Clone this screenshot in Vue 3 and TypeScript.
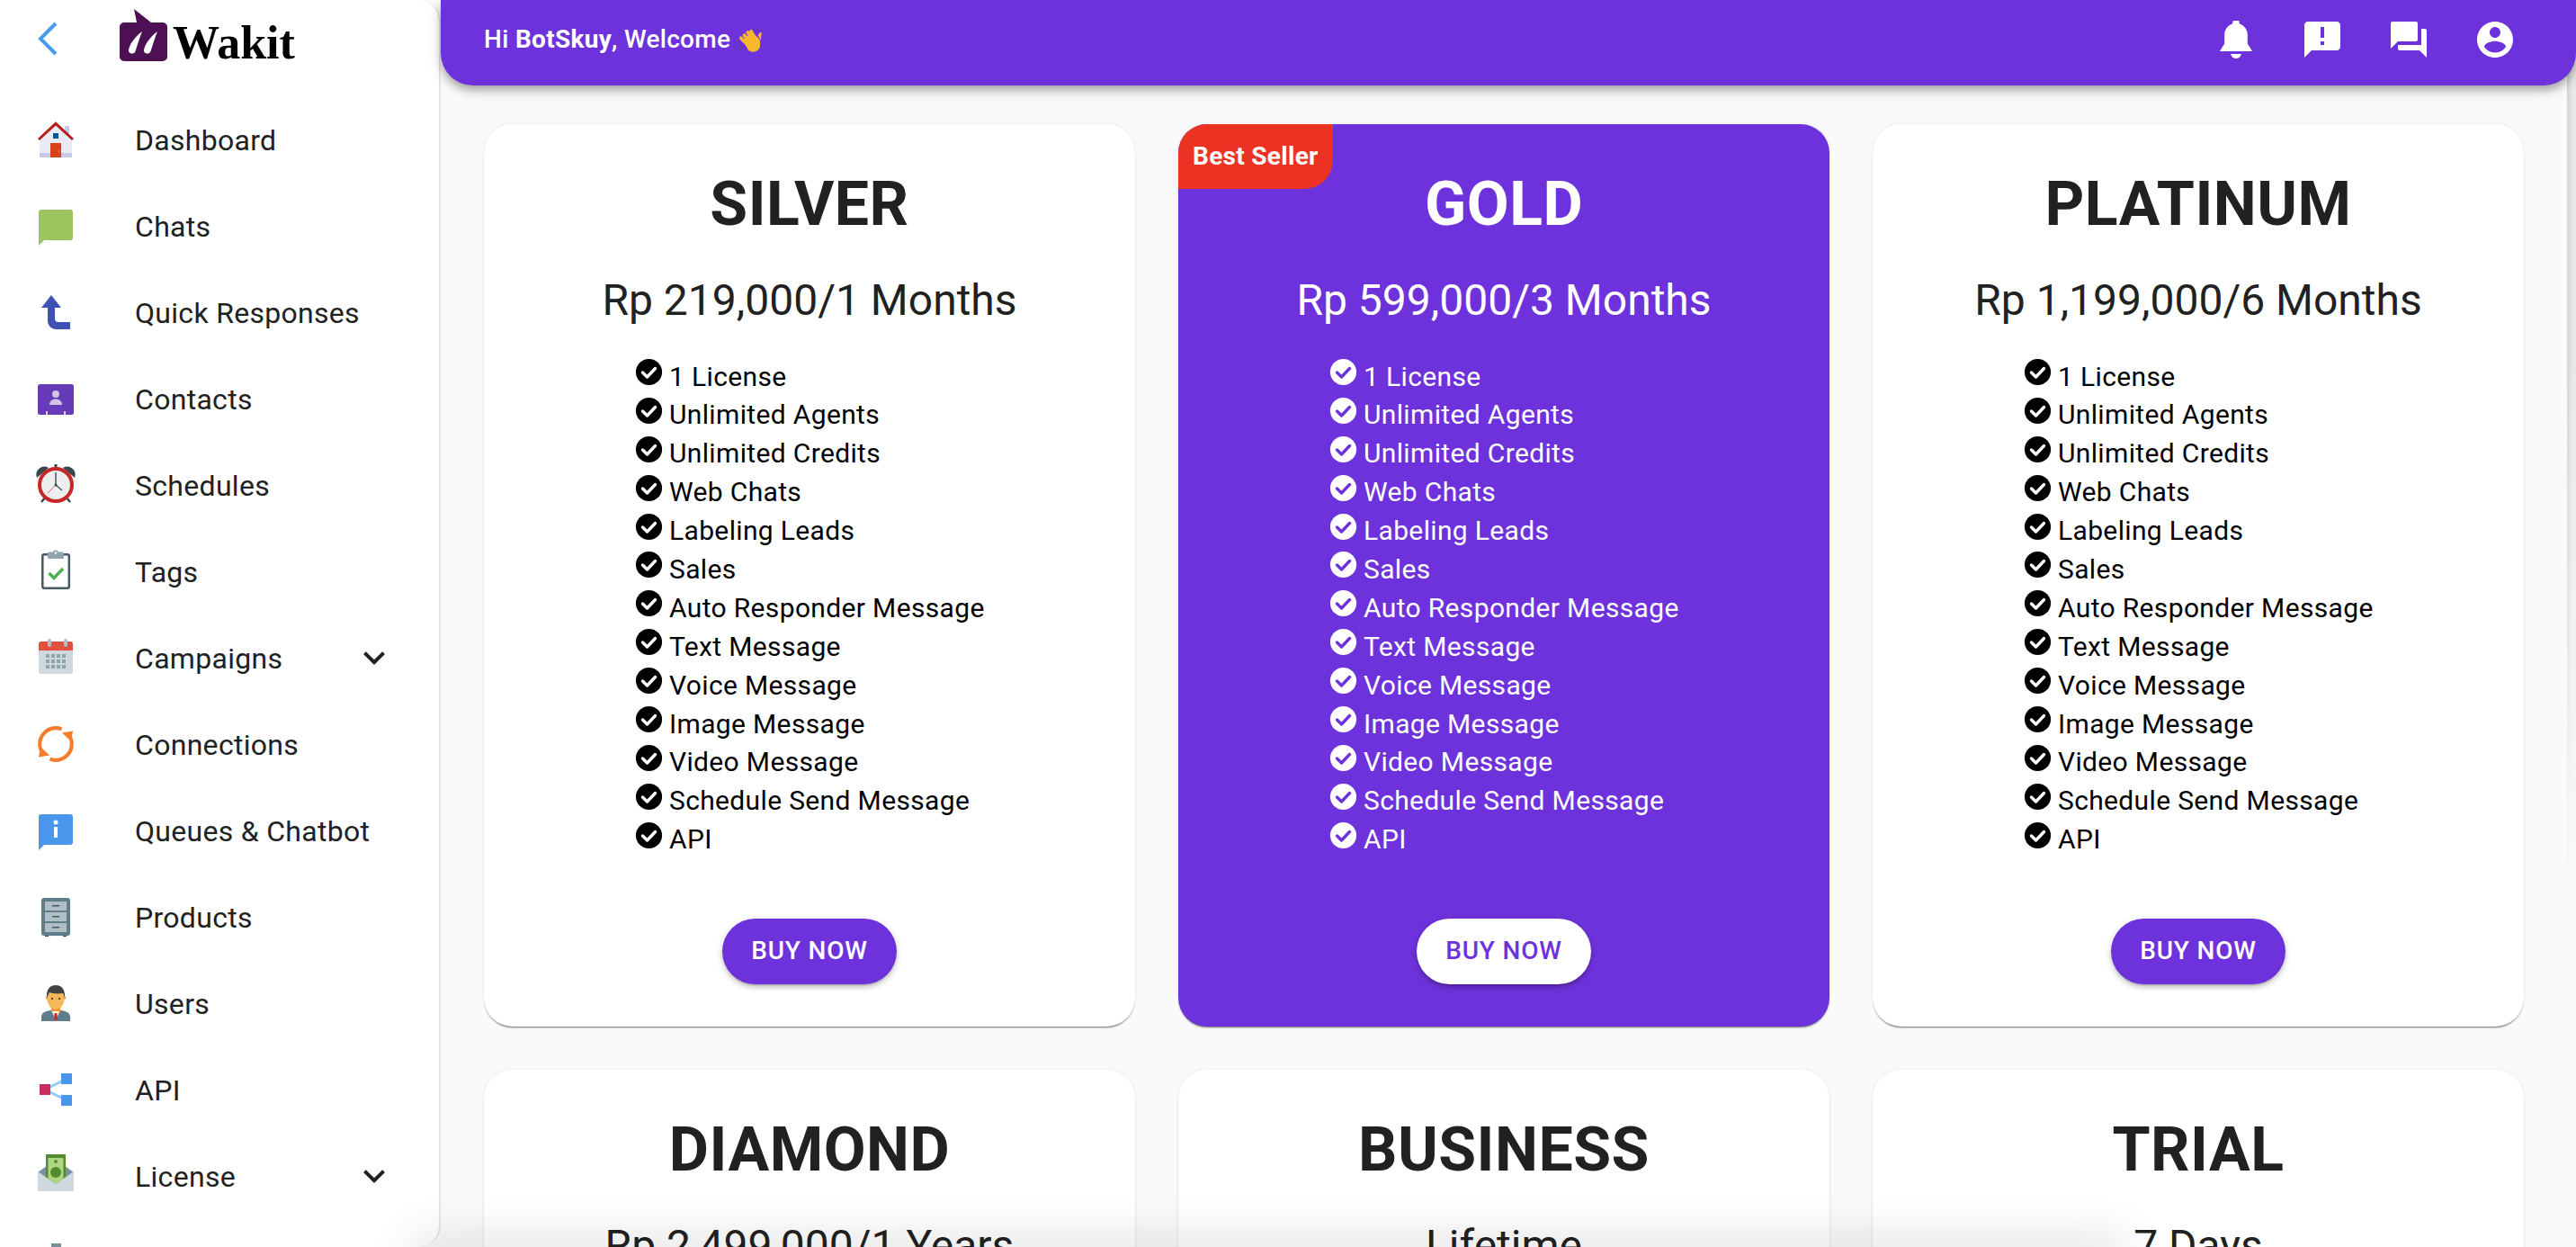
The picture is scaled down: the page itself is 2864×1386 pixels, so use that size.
<template>
  <div class="layout">
    <aside class="sidebar">
      <div class="brand">
        <svg class="back" viewBox="0 0 24 40" width="24" height="40">
          <path d="M21 3 4 20l17 17" fill="none" stroke="#4a9bf0" stroke-width="4" />
        </svg>
        <svg class="logo-mark" viewBox="0 0 54 60" width="54" height="60">
          <path d="M16 0 35 15h13a5 5 0 0 1 5 5v33a5 5 0 0 1-5 5H5a5 5 0 0 1-5-5V20a5 5 0 0 1 5-5h14z" fill="#4d1052" />
          <path d="M25 25c-8 6-14 14-15 21-.5 4 6 5 7.500 1C20 40 22 32 25 25zM42 25c-8 6-14 14-15 21-.5 4 6 5 7.500 1C37 40 39 32 42 25z" fill="#fff" />
        </svg>
        <span class="logo-text">Wakit</span>
      </div>
      <nav class="menu">
        <div v-for="item in menu" :key="item.id" class="menu-item">
          <svg class="menu-icon" viewBox="0 0 48 48" width="48" height="48">
            <g v-if="item.id === 'home'">
              <polygon fill="#E8EAF6" points="42,39 6,39 6,23 24,6 42,23" />
              <polygon fill="#C5CAE9" points="39,21 34,16 34,9 39,9" />
              <rect x="6" y="39" width="36" height="5" fill="#C5CAE9" />
              <polygon fill="#B71C1C" points="24,4.3 4,22.9 6,25.1 24,8.4 42,25.1 44,22.9" />
              <rect x="18" y="28" width="12" height="16" fill="#D84315" />
              <rect x="21" y="17" width="6" height="6" fill="#01579B" />
              <rect x="27" y="35.5" width="1" height="3" fill="#FF8A65" />
            </g>
            <path v-else-if="item.id === 'chats'" d="M8 6h32a3 3 0 0 1 3 3v28a3 3 0 0 1-3 3H11l-6 6V9a3 3 0 0 1 3-3z" fill="#9cc45f" />
            <path v-else-if="item.id === 'quick'" d="M19 5 30 19h-7v12a4 4 0 0 0 4 4h13v8H24a9 9 0 0 1-9-9V19H8z" fill="#3f51b5" />
            <g v-else-if="item.id === 'contacts'">
              <rect x="4" y="8" width="40" height="34" rx="2.5" fill="#673ab7" />
              <circle cx="24" cy="19" r="4" fill="#d1c4e9" />
              <path d="M17 31c0-4 3-6.500 7-6.500s7 2.500 7 6.500z" fill="#d1c4e9" />
              <path d="M14 38v4M34 38v4" stroke="#fff" stroke-width="1.5" />
            </g>
            <g v-else-if="item.id === 'clock'">
              <path d="M3 16a9 9 0 0 1 13-11zM45 16a9 9 0 0 0-13-11z" fill="#37474f" />
              <path d="M13 37 8 43M35 37l5 6" stroke="#37474f" stroke-width="2.5" />
              <rect x="22.5" y="1" width="3" height="5" fill="#37474f" />
              <circle cx="24" cy="24" r="18" fill="#eee" stroke="#c62828" stroke-width="4" />
              <path d="M24 10v14l7 6" fill="none" stroke="#455a64" stroke-width="1.5" />
              <path d="M24 24 15 33" stroke="#e53935" stroke-width=".8" />
              <circle cx="24" cy="24" r="1.5" fill="#37474f" />
            </g>
            <g v-else-if="item.id === 'tags'">
              <rect x="9.3" y="5.3" width="29.5" height="37.5" rx="2" fill="#fff" stroke="#455a64" stroke-width="2.5" />
              <rect x="15" y="2.5" width="18" height="7.5" rx="1.5" fill="#90a4ae" />
              <circle cx="24" cy="3.5" r="3" fill="#90a4ae" />
              <circle cx="24" cy="3.5" r="1.2" fill="#fff" />
              <path d="m16.500 26 5.500 5.500 10-10.500" fill="none" stroke="#4caf50" stroke-width="3.5" />
            </g>
            <g v-else-if="item.id === 'calendar'">
              <path d="M5 16h38v23a3 3 0 0 1-3 3H8a3 3 0 0 1-3-3z" fill="#cfd8dc" />
              <path d="M8 6h32a3 3 0 0 1 3 3v7H5V9a3 3 0 0 1 3-3z" fill="#e04f3f" />
              <rect x="15" y="3" width="4" height="9" rx="2" fill="#b0bec5" />
              <rect x="33" y="3" width="4" height="9" rx="2" fill="#b0bec5" />
              <g fill="#90a4ae">
                <template v-for="y in [20, 26, 32]" :key="y">
                  <rect v-for="x in [13, 19, 25, 31]" :key="x" :x="x" :y="y" width="4" height="4" />
                </template>
              </g>
            </g>
            <g v-else-if="item.id === 'sync'">
              <path d="M30.500 7.300A18 18 0 0 0 7.500 31M17.500 40.700A18 18 0 0 0 40.500 17" fill="none" stroke="#f57c28" stroke-width="4" />
              <polygon points="5,38.5 17,36.5 7,27" fill="#f57c28" />
              <polygon points="43,9.5 31,11.5 41,21" fill="#f57c28" />
            </g>
            <g v-else-if="item.id === 'queues'">
              <path d="M8 6h32a3 3 0 0 1 3 3v28a3 3 0 0 1-3 3H11l-6 6V9a3 3 0 0 1 3-3z" fill="#4a96ec" />
              <circle cx="24" cy="15" r="2.5" fill="#fff" />
              <rect x="22" y="20" width="4" height="12" fill="#fff" />
            </g>
            <g v-else-if="item.id === 'products'">
              <rect x="12" y="43" width="4" height="3" fill="#37474f" />
              <rect x="32" y="43" width="4" height="3" fill="#37474f" />
              <rect x="8" y="3" width="32" height="42" rx="3" fill="#607d8b" />
              <g v-for="y in [7, 19, 31]" :key="y">
                <rect x="12" :y="y" width="24" height="10" fill="#b0bec5" />
                <rect x="20" :y="y + 4" width="8" height="1.5" fill="#455a64" />
              </g>
            </g>
            <g v-else-if="item.id === 'users'">
              <path d="M8 44v-5c0-5 6-7 16-8 10 1 16 3 16 8v5z" fill="#607d8b" />
              <path d="M19 29h10v5l-5 4-5-4z" fill="#f2962e" />
              <path d="M20 33h8l-4 11z" fill="#fff" />
              <path d="M22.700 35h2.600l.7 6-2 3-2-3z" fill="#c62828" />
              <circle cx="14.5" cy="18" r="1.8" fill="#f2962e" />
              <circle cx="33.5" cy="18" r="1.8" fill="#f2962e" />
              <ellipse cx="24" cy="19" rx="9.8" ry="11.5" fill="#f5b95b" />
              <path d="M14 18c-.6-9 3-14 10-14 7 0 10.600 5 10 14l-2-5c-5 .8-11 .6-15-1z" fill="#424242" />
              <circle cx="20" cy="19" r="1.2" fill="#784719" />
              <circle cx="28" cy="19" r="1.2" fill="#784719" />
            </g>
            <g v-else-if="item.id === 'api'">
              <path d="M12 24 36 12M12 24l24 12" stroke="#90caf9" stroke-width="3" />
              <rect x="6" y="18" width="12" height="12" fill="#c62f60" />
              <rect x="30" y="6" width="12" height="12" fill="#4a96ec" />
              <rect x="30" y="30" width="12" height="12" fill="#4a96ec" />
            </g>
            <g v-else-if="item.id === 'license'">
              <path d="M4 20 24 6l20 14v6H4z" fill="#78909c" />
              <path d="M13 0h22v27l-11 8-11-8z" fill="#558b2f" />
              <path d="M15.500 4h17v23l-8.500 6-8.500-6z" fill="#aed581" />
              <path d="M13 0h5l-5 4zM35 0h-5l5 4z" fill="#558b2f" />
              <circle cx="24" cy="20" r="6" fill="#558b2f" />
              <circle cx="24" cy="8" r="2" fill="#558b2f" />
              <path d="M4 19 24 33l20-14v20a2 2 0 0 1-2 2H6a2 2 0 0 1-2-2z" fill="#cfd8dc" />
            </g>
            <rect v-else x="19" y="3" width="11" height="30" fill="#78909c" />
          </svg>
          <span class="menu-label">{{ item.label }}</span>
          <svg v-if="item.expand" class="expand" viewBox="0 0 24 24" width="48" height="48">
            <path d="M16.590 8.590 12 13.170 7.410 8.590 6 10l6 6 6-6z" fill="#212121" />
          </svg>
        </div>
      </nav>
    </aside>

    <div class="main">
      <header class="topbar">
        <div class="greeting">
          <span>Hi <b>BotSkuy</b>, Welcome</span>
          <svg class="wave" viewBox="0 0 28 28" width="30" height="30">
            <path d="M19 2c2 .6 3.500 2 4 4M2 19c.5 2 2 3.400 4 4M1 21.500c.6 1.500 1.400 2.400 3 3.200" fill="none" stroke="#5c4a78" stroke-width="1" />
            <path d="M8 9.500 16 19M11.500 6.500l7.500 10M15 5.500l6.500 11M4.500 12.500 13 21" fill="none" stroke="#f8b82d" stroke-width="3.6" stroke-linecap="round" />
            <path d="M7 15c2-3 6-8 10-6 4 1 6 3 7 6 1 4 .5 8-2 10-3 2.500-7 2.400-10 0z" fill="#f8b82d" />
            <path d="m22 9 2.500-2.500c1-.6 1.800.4 1.300 1.500L25 15z" fill="#f8b82d" />
          </svg>
        </div>
        <div class="top-icons">
          <button v-for="path in topIcons" :key="path" class="icon-btn">
            <svg viewBox="0 0 24 24" width="48" height="48"><path :d="path" fill="#fff" /></svg>
          </button>
        </div>
      </header>

      <section class="plans">
        <div v-for="plan in plans" :key="plan.name" class="plan" :class="{ featured: plan.featured }">
          <div v-if="plan.featured" class="badge">Best Seller</div>
          <h4 class="plan-name">{{ plan.name }}</h4>
          <h5 class="plan-price">{{ plan.price }}</h5>
          <template v-if="plan.showDetails">
            <ul class="features">
              <li v-for="feature in features" :key="feature">
                <svg viewBox="0 0 35 35" width="35" height="35">
                  <circle cx="17.5" cy="17.5" r="14.6" class="check-bg" />
                  <path d="m10.500 18 5 5 9-9.500" fill="none" class="check-mark" stroke-width="3.4" stroke-linecap="round" stroke-linejoin="round" />
                </svg>
                <span>{{ feature }}</span>
              </li>
            </ul>
            <div class="buy-row">
              <button class="buy">BUY NOW</button>
            </div>
          </template>
        </div>
      </section>
      <div class="scroll-edge"></div>
      <div class="bottom-shade"></div>
    </div>
  </div>
</template>

<script setup lang="ts">
interface MenuItem {
  id: string
  label: string
  expand?: boolean
}

interface Plan {
  name: string
  price: string
  featured?: boolean
  showDetails?: boolean
}

const menu: MenuItem[] = [
  { id: 'home', label: 'Dashboard' },
  { id: 'chats', label: 'Chats' },
  { id: 'quick', label: 'Quick Responses' },
  { id: 'contacts', label: 'Contacts' },
  { id: 'clock', label: 'Schedules' },
  { id: 'tags', label: 'Tags' },
  { id: 'calendar', label: 'Campaigns', expand: true },
  { id: 'sync', label: 'Connections' },
  { id: 'queues', label: 'Queues & Chatbot' },
  { id: 'products', label: 'Products' },
  { id: 'users', label: 'Users' },
  { id: 'api', label: 'API' },
  { id: 'license', label: 'License', expand: true },
  { id: 'more', label: '' }
]

const topIcons = [
  'M10.400 1.500h3.200l.4 1.800c2.800.9 4.400 3.300 4.400 6.200v4.300c0 1 .6 1.600 1.200 2.300l1.400 2.400H3l1.400-2.400c.6-.7 1.200-1.300 1.200-2.300V9.500c0-2.900 1.600-5.300 4.400-6.200zM9 20h6c-.4 1.500-1.600 2.500-3 2.500S9.400 21.500 9 20z',
  'M20 2H4c-1.100 0-2 .9-2 2v18l4-4h14c1.100 0 2-.9 2-2V4c0-1.100-.9-2-2-2zm-7 9h-2V5h2v6zm0 4h-2v-2h2v2z',
  'M21 6h-2v9H6v2c0 .55.45 1 1 1h11l4 4V7c0-.55-.45-1-1-1zm-4 6V3c0-.55-.45-1-1-1H3c-.55 0-1 .45-1 1v14l4-4h10c.55 0 1-.45 1-1z',
  'M12 2C6.480 2 2 6.480 2 12s4.480 10 10 10 10-4.480 10-10S17.520 2 12 2zm0 3c1.660 0 3 1.340 3 3s-1.340 3-3 3-3-1.340-3-3 1.340-3 3-3zm0 14.200c-2.500 0-4.710-1.280-6-3.220.03-1.990 4-3.080 6-3.080 1.990 0 5.970 1.090 6 3.080-1.290 1.940-3.500 3.220-6 3.220z'
]

const features = [
  '1 License',
  'Unlimited Agents',
  'Unlimited Credits',
  'Web Chats',
  'Labeling Leads',
  'Sales',
  'Auto Responder Message',
  'Text Message',
  'Voice Message',
  'Image Message',
  'Video Message',
  'Schedule Send Message',
  'API'
]

const plans: Plan[] = [
  { name: 'SILVER', price: 'Rp 219,000/1 Months', showDetails: true },
  { name: 'GOLD', price: 'Rp 599,000/3 Months', featured: true, showDetails: true },
  { name: 'PLATINUM', price: 'Rp 1,199,000/6 Months', showDetails: true },
  { name: 'DIAMOND', price: 'Rp 2,499,000/1 Years' },
  { name: 'BUSINESS', price: 'Lifetime' },
  { name: 'TRIAL', price: '7 Days' }
]
</script>

<style>
html,
body {
  margin: 0;
  height: 100%;
  overflow: hidden;
}
</style>

<style scoped>
.layout {
  display: flex;
  width: 2864px;
  height: 1386px;
  overflow: hidden;
  background: #fafafa;
  font-family: Roboto, "Liberation Sans", sans-serif;
  color: #212121;
}

.sidebar {
  flex: 0 0 490px;
  box-sizing: border-box;
  height: 100%;
  overflow: hidden;
  background: #fff;
  border-right: 2px solid #e4e4e4;
  border-radius: 0 24px 24px 0;
}

.brand {
  display: flex;
  align-items: flex-start;
  height: 107px;
  box-sizing: border-box;
}

.back {
  margin: 23px 0 0 41px;
}

.logo-mark {
  margin: 10px 0 0 68px;
}

.logo-text {
  margin: 16px 0 0 5px;
  font-family: "Liberation Serif", serif;
  font-weight: 700;
  font-size: 52px;
  line-height: 64px;
  color: #000;
}

.menu-item {
  display: flex;
  align-items: center;
  height: 96px;
  padding: 0 48px 0 38px;
}

.menu-icon {
  flex: none;
  margin-right: 64px;
}

.menu-label {
  flex: 1;
  padding-top: 2px;
  font-size: 32px;
  line-height: 48px;
  letter-spacing: 0.3px;
}

.main {
  position: relative;
  flex: 1;
  min-width: 0;
}

.topbar {
  display: flex;
  align-items: center;
  justify-content: space-between;
  position: relative;
  z-index: 2;
  height: 95px;
  box-sizing: border-box;
  padding: 0 42px 8px 48px;
  background: #6e32dc;
  color: #fff;
  border-radius: 0 0 36px 36px;
  box-shadow: 0 4px 8px -2px rgba(0, 0, 0, 0.2), 0 8px 10px rgba(0, 0, 0, 0.14), 0 2px 20px rgba(0, 0, 0, 0.12);
}

.greeting {
  display: flex;
  align-items: center;
  gap: 7px;
  font-size: 28px;
  font-weight: 500;
  letter-spacing: 0.3px;
}

.greeting b {
  font-weight: 700;
}

.top-icons {
  display: flex;
}

.icon-btn {
  display: flex;
  padding: 0 24px;
  border: 0;
  background: none;
}

.plans {
  display: grid;
  grid-template-columns: repeat(3, 724px);
  gap: 48px;
  padding: 43px 0 0 48px;
}

.plan {
  position: relative;
  box-sizing: border-box;
  height: 1003px;
  padding: 47px 0 0;
  background: #fff;
  border-radius: 32px;
  text-align: center;
  box-shadow: 0 2px 2px -1px rgba(0, 0, 0, 0.55), 0 0 4px rgba(0, 0, 0, 0.07);
}

.plan.featured {
  background: #6e32dc;
  color: #fff;
}

.badge {
  position: absolute;
  top: 0;
  left: 0;
  width: 172px;
  height: 72px;
  box-sizing: border-box;
  padding-left: 16px;
  background: #ec3323;
  border-radius: 32px 0 32px 0;
  color: #fff;
  font-size: 28px;
  font-weight: 700;
  line-height: 71px;
  letter-spacing: 0.3px;
  text-align: left;
  white-space: nowrap;
}

.plan-name {
  margin: 0;
  font-size: 68px;
  font-weight: 700;
  line-height: 84px;
  letter-spacing: 0.5px;
}

.plan-price {
  margin: 33px 0 0;
  font-size: 48px;
  font-weight: 400;
  line-height: 64px;
}

.features {
  margin: 30.5px 0 0;
  padding: 0 0 0 166px;
  list-style: none;
  text-align: left;
  font-size: 30px;
  line-height: 43px;
  letter-spacing: 0.35px;
  color: #000;
}

.featured .features {
  color: #fff;
}

.features li {
  display: flex;
  align-items: flex-start;
  height: 42.9px;
}

.features svg {
  flex: none;
  margin: -0.5px 5px 0 0;
}

.check-bg {
  fill: #000;
}

.check-mark {
  stroke: #fff;
}

.featured .check-bg {
  fill: #fff;
}

.featured .check-mark {
  stroke: #6e32dc;
}

.buy-row {
  display: flex;
  justify-content: center;
  margin-top: 66.5px;
}

.buy {
  width: 194px;
  height: 73px;
  padding: 0 0 2px;
  border: 0;
  border-radius: 37px;
  background: #6e32dc;
  color: #fff;
  font-family: inherit;
  font-size: 28px;
  font-weight: 500;
  letter-spacing: 0.8px;
  box-shadow: 0 3px 2px -2px rgba(0, 0, 0, 0.2), 0 4px 5px rgba(0, 0, 0, 0.14), 0 2px 10px rgba(0, 0, 0, 0.12);
}

.featured .buy {
  background: #fff;
  color: #6e32dc;
}

.scroll-edge {
  position: absolute;
  top: 0;
  right: 0;
  width: 10px;
  height: 1000px;
  background: linear-gradient(to right, #d2d2d2, #e8e8e8 60%);
  -webkit-mask-image: linear-gradient(to bottom, #000 40%, transparent);
  mask-image: linear-gradient(to bottom, #000 40%, transparent);
}

.bottom-shade {
  position: absolute;
  z-index: 3;
  left: -20px;
  bottom: -6px;
  width: 1880px;
  height: 2px;
  box-shadow: 0 0 50px 12px rgba(0, 0, 0, 0.16);
}
</style>
